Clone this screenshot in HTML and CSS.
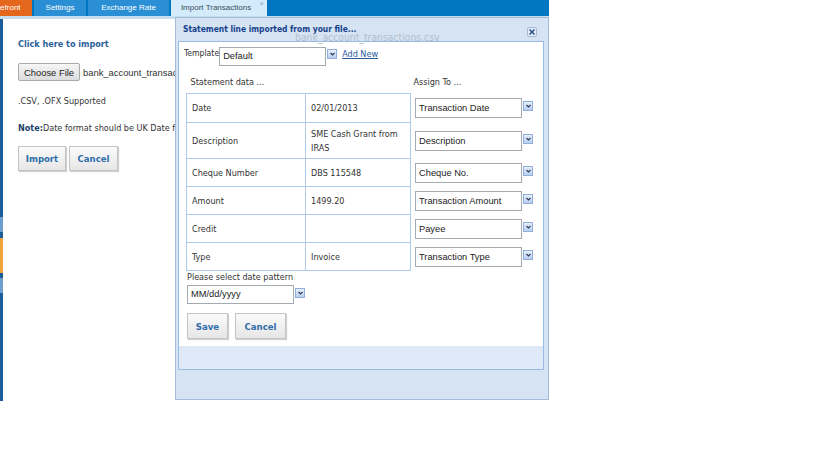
FILE: index.html
```html
<!DOCTYPE html>
<html lang="en">

<head>
    <meta charset="UTF-8">
    <meta name="viewport" content="width=device-width, initial-scale=1.0">
    <title>Import Transactions</title>
    <link rel="stylesheet" href="styles.css">
</head>

<body>
    <div class="app">
        <div class="tabs">
            <div class="tab tab-orange">Storefront</div>
            <div class="tab tab-settings">Settings</div>
            <div class="tab tab-rate">Exchange Rate</div>
            <div class="tab tab-active">Import Transactions <span class="tab-close">&times;</span></div>
        </div>

        <div class="main">
            <div class="stripe"></div>
            <div class="import-panel">
                <div class="import-title">Click here to import</div>
                <div class="file-row">
                    <button class="file-btn">Choose File</button>
                    <span class="file-name">bank_account_transactions.csv</span>
                </div>
                <div class="supported">.CSV, .OFX Supported</div>
                <div class="note"><b>Note:</b>Date format should be UK Date format (dd/MM/yyyy)</div>
                <div class="btn-row">
                    <button class="btn btn-import">Import</button>
                    <button class="btn btn-cancel">Cancel</button>
                </div>
            </div>
        </div>

        <!-- mapping dialog sits over the import panel -->
        <div class="dialog">
            <div class="dlg-head">
                <span class="dlg-title">Statement line imported from your file...</span>
                <span class="dlg-ghost">bank_account_transactions.csv</span>
                <span class="dlg-close">
                    <svg width="8" height="8" viewBox="0 0 8 8"><path d="M1.5 1.5 L6.5 6.5 M6.5 1.5 L1.5 6.5" stroke="#2a4f88" stroke-width="1.5" fill="none"/></svg>
                </span>
            </div>
            <div class="dlg-panel">
                <div class="dlg-body">
                    <div class="tpl-row">
                        <span class="tpl-label">Template</span>
                        <div class="sel">
                            <div class="sel-box">Default</div>
                            <span class="sel-arrow"><svg width="7" height="8" viewBox="0 0 7 8"><path d="M1.5 3 L3.5 5 L5.5 3" stroke="#2b3d5a" stroke-width="1.2" fill="none"/></svg></span>
                        </div>
                        <a class="add-new" href="#">Add New</a>
                    </div>

                    <table class="map">
                        <colgroup>
                            <col class="col-k">
                            <col class="col-v">
                            <col class="col-a">
                        </colgroup>
                        <tr class="map-head">
                            <th>Statement data ...</th>
                            <th></th>
                            <th class="a">Assign To ...</th>
                        </tr>
                        <tr class="row row-first">
                            <td class="k">Date</td>
                            <td class="v">02/01/2013</td>
                            <td class="a"><div class="sel"><div class="sel-box">Transaction Date</div><span class="sel-arrow"><svg width="7" height="8" viewBox="0 0 7 8"><path d="M1.5 3 L3.5 5 L5.5 3" stroke="#2b3d5a" stroke-width="1.2" fill="none"/></svg></span></div></td>
                        </tr>
                        <tr class="row tall">
                            <td class="k">Description</td>
                            <td class="v">SME Cash Grant from IRAS</td>
                            <td class="a"><div class="sel"><div class="sel-box">Description</div><span class="sel-arrow"><svg width="7" height="8" viewBox="0 0 7 8"><path d="M1.5 3 L3.5 5 L5.5 3" stroke="#2b3d5a" stroke-width="1.2" fill="none"/></svg></span></div></td>
                        </tr>
                        <tr class="row">
                            <td class="k">Cheque Number</td>
                            <td class="v">DBS 115548</td>
                            <td class="a"><div class="sel"><div class="sel-box">Cheque No.</div><span class="sel-arrow"><svg width="7" height="8" viewBox="0 0 7 8"><path d="M1.5 3 L3.5 5 L5.5 3" stroke="#2b3d5a" stroke-width="1.2" fill="none"/></svg></span></div></td>
                        </tr>
                        <tr class="row">
                            <td class="k">Amount</td>
                            <td class="v">1499.20</td>
                            <td class="a"><div class="sel"><div class="sel-box">Transaction Amount</div><span class="sel-arrow"><svg width="7" height="8" viewBox="0 0 7 8"><path d="M1.5 3 L3.5 5 L5.5 3" stroke="#2b3d5a" stroke-width="1.2" fill="none"/></svg></span></div></td>
                        </tr>
                        <tr class="row">
                            <td class="k">Credit</td>
                            <td class="v"></td>
                            <td class="a"><div class="sel"><div class="sel-box">Payee</div><span class="sel-arrow"><svg width="7" height="8" viewBox="0 0 7 8"><path d="M1.5 3 L3.5 5 L5.5 3" stroke="#2b3d5a" stroke-width="1.2" fill="none"/></svg></span></div></td>
                        </tr>
                        <tr class="row">
                            <td class="k">Type</td>
                            <td class="v">Invoice</td>
                            <td class="a"><div class="sel"><div class="sel-box">Transaction Type</div><span class="sel-arrow"><svg width="7" height="8" viewBox="0 0 7 8"><path d="M1.5 3 L3.5 5 L5.5 3" stroke="#2b3d5a" stroke-width="1.2" fill="none"/></svg></span></div></td>
                        </tr>
                    </table>

                    <div class="pattern-label">Please select date pattern</div>
                    <div class="sel sel-date">
                        <div class="sel-box">MM/dd/yyyy</div>
                        <span class="sel-arrow"><svg width="7" height="8" viewBox="0 0 7 8"><path d="M1.5 3 L3.5 5 L5.5 3" stroke="#2b3d5a" stroke-width="1.2" fill="none"/></svg></span>
                    </div>

                    <div class="dlg-btns">
                        <button class="btn btn-save">Save</button>
                        <button class="btn btn-cancel">Cancel</button>
                    </div>
                </div>
                <div class="dlg-foot"></div>
            </div>
        </div>
    </div>
</body>

</html>
```

FILE: styles.css
```css
body {
    margin: 0;
    padding: 0;
    background: #fff;
    font-family: "DejaVu Sans Condensed", "DejaVu Sans", sans-serif;
    font-stretch: condensed;
    font-size: 9px;
    color: #333;
}

.app {
    position: relative;
    width: 549px;
    height: 401px;
    overflow: hidden;
}

/* top tab strip */
.tabs {
    display: flex;
    gap: 2px;
    height: 16px;
    background: #0077c0;
    border-bottom: 3px solid #c7ddf0;
    overflow: hidden;
    font-family: "Liberation Sans", Arial, sans-serif;
    font-size: 8px;
}

.tab {
    flex: none;
    line-height: 16px;
    text-align: center;
    color: #fff;
    background: #2a8fd5;
    white-space: nowrap;
}

.tab-orange {
    width: 58px;
    margin-left: -26px;
    background: #e5661d;
}

.tab-settings {
    width: 52px;
}

.tab-rate {
    width: 81px;
}

.tab-active {
    position: relative;
    width: 90px;
    padding-right: 6px;
    background: #d3ebfa;
    color: #3b4b5c;
}

.tab-close {
    position: absolute;
    right: 3px;
    top: -4px;
    font-size: 8px;
    color: #8aa2bc;
}

.main {
    display: flex;
    height: 382px;
}

.stripe {
    width: 3px;
    background: linear-gradient(#1d5d9b 0, #1d5d9b 198px, #6f9fcf 198px, #6f9fcf 213px,
            #1d5d9b 213px, #1d5d9b 219px, #f2a33a 219px, #f2a33a 254px,
            #1d5d9b 254px, #1d5d9b 259px, #6f9fcf 259px, #6f9fcf 274px, #1d5d9b 274px);
}

.import-panel {
    flex: 1;
    padding-left: 15px;
    white-space: nowrap;
}

.import-title {
    margin-top: 18px;
    line-height: 14px;
    font-weight: bold;
    color: #2b5f9a;
}

.file-row {
    display: flex;
    align-items: center;
    gap: 3px;
    margin-top: 12px;
    font-family: "Liberation Sans", Arial, sans-serif;
    font-size: 9.4px;
}

.file-btn {
    width: 62px;
    height: 18px;
    padding: 0;
    border: 1px solid #a9a9a9;
    border-radius: 2px;
    background: linear-gradient(#f6f6f6, #dcdcdc);
    font-family: "Liberation Sans", Arial, sans-serif;
    font-size: 9.4px;
    color: #222;
}

.file-name {
    color: #333;
}

.supported {
    margin-top: 13px;
    line-height: 14px;
}

.note {
    margin-top: 13px;
    line-height: 14px;
}

.note b {
    color: #1d3f6b;
}

.btn-row {
    display: flex;
    gap: 3px;
    margin-top: 11px;
}

.btn {
    height: 25px;
    padding: 0;
    border: 1px solid #c4c4c4;
    background: linear-gradient(#fbfbfb, #e6e6e6);
    box-shadow: 1px 1px 1px rgba(0, 0, 0, 0.18);
    font-family: "DejaVu Sans Condensed", "DejaVu Sans", sans-serif;
    font-stretch: condensed;
    font-weight: bold;
    font-size: 9.5px;
    color: #2f6ea9;
}

.btn-import {
    width: 48px;
}

.btn-cancel {
    width: 49px;
}

/* dialog */
.dialog {
    position: absolute;
    left: 175px;
    top: 17px;
    width: 374px;
    height: 383px;
    box-sizing: border-box;
    border: 1px solid #a3bad9;
    background: #d5e3f3;
}

.dlg-head {
    position: relative;
    height: 23px;
}

.dlg-title {
    display: block;
    padding-left: 7px;
    line-height: 23px;
    font-weight: bold;
    font-size: 8.4px;
    color: #15428b;
}

.dlg-ghost {
    position: absolute;
    left: 119px;
    top: 13px;
    font-size: 10.3px;
    color: #b3bfcd;
}

.dlg-close {
    position: absolute;
    right: 11px;
    top: 9px;
    display: flex;
    align-items: center;
    justify-content: center;
    width: 10px;
    height: 10px;
    box-sizing: border-box;
    border: 1px solid #a4bcdc;
    border-radius: 2px;
    background: #e4edf8;
}

.dlg-panel {
    margin: 0 4px 0 2px;
    border: 1px solid #99bbe8;
    background: #fff;
}

.dlg-body {
    height: 304px;
    box-sizing: border-box;
    padding: 5px 0 0 5px;
}

.dlg-foot {
    height: 23px;
    background: #dfe8f6;
}

.tpl-row {
    display: flex;
    align-items: flex-start;
    height: 19px;
}

.tpl-label {
    line-height: 12px;
    font-size: 8.6px;
    color: #333;
}

.add-new {
    margin-left: 5px;
    line-height: 14px;
    color: #2a5a9a;
}

/* fake select boxes */
.sel {
    display: flex;
    align-items: flex-start;
}

.sel-box {
    width: 107px;
    height: 19px;
    box-sizing: border-box;
    padding-left: 3px;
    border: 1px solid #a5a9b0;
    background: #fff;
    line-height: 17px;
    font-family: "Liberation Sans", Arial, sans-serif;
    font-size: 9.3px;
    color: #222;
    white-space: nowrap;
}

.sel-arrow {
    display: flex;
    align-items: center;
    justify-content: center;
    width: 10px;
    height: 10px;
    box-sizing: border-box;
    margin: 2px 0 0 1px;
    border: 1px solid #90aedb;
    background: linear-gradient(#e8f0fb, #b9cef0);
}

.map {
    table-layout: fixed;
    width: 359px;
    margin: 10px 0 0 2px;
    border-collapse: collapse;
}

.col-k {
    width: 119px;
}

.col-v {
    width: 105px;
}

.col-a {
    width: 135px;
}

.map th {
    padding: 0 0 4px 4px;
    line-height: 13px;
    text-align: left;
    font-weight: normal;
    color: #333;
}

.map th.a {
    padding-left: 3px;
}

.map tr.row {
    height: 28px;
}

.map tr.row-first {
    height: 29px;
}

.map tr.tall {
    height: 36px;
}

.map td.k,
.map td.v {
    padding: 0 5px;
    line-height: 14px;
    border: 1px solid #aecae9;
    vertical-align: middle;
}

.map td.a {
    padding: 0 0 0 4px;
    vertical-align: middle;
}

.map td.a .sel-box {
    height: 20px;
    line-height: 18px;
}

.map td.a .sel-arrow {
    margin-top: 3px;
}

.pattern-label {
    margin-left: 3px;
    line-height: 13px;
}

.sel-date {
    margin: 1px 0 0 3px;
}

.sel-date .sel-arrow {
    margin-top: 3px;
}

.dlg-btns {
    display: flex;
    gap: 7px;
    margin: 9px 0 0 3px;
}

.btn-save {
    width: 41px;
    height: 26px;
}

.dlg-btns .btn-cancel {
    width: 51px;
    height: 26px;
}
```
